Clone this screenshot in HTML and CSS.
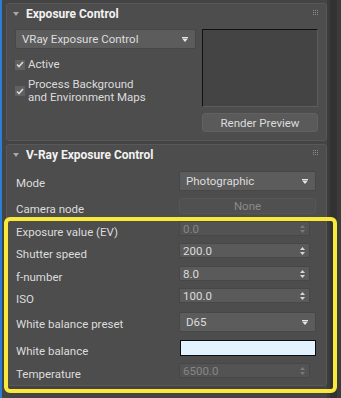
FILE: index.html
```html
<!DOCTYPE html>
<html lang="en">
<head>
  <meta charset="UTF-8">
  <title>Exposure Control</title>
  <link rel="stylesheet" href="styles.css">
</head>
<body>
  <div class="app">
    <div class="stripe"></div>

    <div class="rollouts">
      <!-- Exposure Control rollout -->
      <section class="rollout">
        <header class="rollout-head">
          <svg class="caret" width="6" height="4" viewBox="0 0 6 4"><path d="M0 0H6L3 4Z" fill="#a8a8a8"/></svg>
          <span class="title">Exposure Control</span>
          <svg class="grip" width="5" height="5" viewBox="0 0 5 5" fill="#8c8c8c"><rect x="0" y="0" width="1" height="1"/><rect x="2" y="0" width="1" height="1"/><rect x="4" y="0" width="1" height="1"/><rect x="0" y="2" width="1" height="1"/><rect x="2" y="2" width="1" height="1"/><rect x="4" y="2" width="1" height="1"/><rect x="0" y="4" width="1" height="1"/><rect x="2" y="4" width="1" height="1"/><rect x="4" y="4" width="1" height="1"/></svg>
        </header>
        <div class="rollout-body split">
          <div class="col-main">
            <div class="dropdown">
              <span>VRay Exposure Control</span>
              <svg class="arrow" width="6" height="5" viewBox="0 0 6 5"><path d="M0 0H6V1H0Z M0 1.5H6L3 5Z" fill="#e6e6e6"/></svg>
            </div>
            <div class="check first">
              <span class="box"><svg width="8" height="7" viewBox="0 0 8 7"><path d="M1 3.5L3 5.5L7 1" fill="none" stroke="#d8d8d8" stroke-width="1.6"/></svg></span>
              <span>Active</span>
            </div>
            <div class="check">
              <span class="box"><svg width="8" height="7" viewBox="0 0 8 7"><path d="M1 3.5L3 5.5L7 1" fill="none" stroke="#d8d8d8" stroke-width="1.6"/></svg></span>
              <span class="lines"><span>Process Background</span><span>and Environment Maps</span></span>
            </div>
          </div>
          <div class="col-side">
            <div class="preview"></div>
            <div class="button">Render Preview</div>
          </div>
        </div>
      </section>

      <!-- V-Ray Exposure Control rollout -->
      <section class="rollout">
        <header class="rollout-head head-two">
          <svg class="caret" width="6" height="4" viewBox="0 0 6 4"><path d="M0 0H6L3 4Z" fill="#a8a8a8"/></svg>
          <span class="title">V-Ray Exposure Control</span>
          <svg class="grip" width="5" height="5" viewBox="0 0 5 5" fill="#8c8c8c"><rect x="0" y="0" width="1" height="1"/><rect x="2" y="0" width="1" height="1"/><rect x="4" y="0" width="1" height="1"/><rect x="0" y="2" width="1" height="1"/><rect x="2" y="2" width="1" height="1"/><rect x="4" y="2" width="1" height="1"/><rect x="0" y="4" width="1" height="1"/><rect x="2" y="4" width="1" height="1"/><rect x="4" y="4" width="1" height="1"/></svg>
        </header>
        <div class="rollout-body params">
          <div class="row r-mode">
            <span class="label">Mode</span>
            <div class="dropdown">
              <span>Photographic</span>
              <svg class="arrow" width="6" height="5" viewBox="0 0 6 5"><path d="M0 0H6V1H0Z M0 1.5H6L3 5Z" fill="#e6e6e6"/></svg>
            </div>
          </div>
          <div class="row r-node">
            <span class="label">Camera node</span>
            <div class="button off">None</div>
          </div>
          <div class="row r-spin">
            <span class="label">Exposure value (EV)</span>
            <div class="spinner off"><span>0.0</span><svg class="ticks" width="5" height="8" viewBox="0 0 5 8"><path d="M2.5 0L5 3H0Z M0 5H5L2.5 8Z" fill="#7a7a7a"/></svg></div>
          </div>
          <div class="row r-spin">
            <span class="label">Shutter speed</span>
            <div class="spinner"><span>200.0</span><svg class="ticks" width="5" height="8" viewBox="0 0 5 8"><path d="M2.5 0L5 3H0Z M0 5H5L2.5 8Z" fill="#d6d6d6"/></svg></div>
          </div>
          <div class="row r-spin gap8">
            <span class="label">f-number</span>
            <div class="spinner"><span>8.0</span><svg class="ticks" width="5" height="8" viewBox="0 0 5 8"><path d="M2.5 0L5 3H0Z M0 5H5L2.5 8Z" fill="#d6d6d6"/></svg></div>
          </div>
          <div class="row r-spin">
            <span class="label">ISO</span>
            <div class="spinner"><span>100.0</span><svg class="ticks" width="5" height="8" viewBox="0 0 5 8"><path d="M2.5 0L5 3H0Z M0 5H5L2.5 8Z" fill="#d6d6d6"/></svg></div>
          </div>
          <div class="row r-mode gap9">
            <span class="label">White balance preset</span>
            <div class="dropdown">
              <span>D65</span>
              <svg class="arrow" width="6" height="5" viewBox="0 0 6 5"><path d="M0 0H6V1H0Z M0 1.5H6L3 5Z" fill="#e6e6e6"/></svg>
            </div>
          </div>
          <div class="row r-node gap8">
            <span class="label">White balance</span>
            <div class="swatch"></div>
          </div>
          <div class="row r-spin">
            <span class="label">Temperature</span>
            <div class="spinner off"><span>6500.0</span><svg class="ticks" width="5" height="8" viewBox="0 0 5 8"><path d="M2.5 0L5 3H0Z M0 5H5L2.5 8Z" fill="#7a7a7a"/></svg></div>
          </div>
        </div>
      </section>
    </div>

    <div class="scrollbar"><div class="track"></div></div>

    <!-- highlight frame drawn over the parameter rows -->
    <div class="highlight"></div>
  </div>
</body>
</html>
```

FILE: styles.css
```css
/* general styling */
* {
  box-sizing: border-box;
  margin: 0;
  padding: 0;
}

html, body {
  height: 100%;
}

body {
  background-color: #444444;
  color: #dcdcdc;
  font-family: Roboto, "Noto Sans", sans-serif;
  font-size: 11.5px;
  overflow: hidden;
}

.app {
  display: flex;
  height: 398px;
  position: relative;
  width: 341px;
}

.stripe {
  background-color: #2a7ed4;
  flex: 0 0 2px;
}

.rollouts {
  display: flex;
  flex-direction: column;
  gap: 3px;
  padding: 3px 0 0 4px;
  width: 325px;
}

.scrollbar {
  background-color: #3b3b3b;
  display: flex;
  flex: 1;
  padding-left: 3px;
}

.scrollbar .track {
  background-color: #323232;
  width: 7px;
}

/* rollout panels */
.rollout {
  background-color: #4d4d4d;
  border: 1px solid #585858;
  border-radius: 3px;
  width: 321px;
}

.rollout-head {
  align-items: center;
  display: flex;
  height: 20px;
  padding: 0 8px 0 6px;
}

.head-two {
  height: 19px;
}

.caret {
  margin-right: 7px;
}

.title {
  color: #f2f2f2;
  flex: 1;
  font-size: 12px;
  font-weight: bold;
}

.grip {
  margin-top: -4px;
}

.rollout-body {
  padding: 5px 8px 8px 8px;
}

/* first rollout */
.split {
  display: flex;
  gap: 6px;
}

.col-main {
  display: flex;
  flex-direction: column;
  width: 181px;
}

.col-side {
  display: flex;
  flex: 1;
  flex-direction: column;
  gap: 6px;
}

.preview {
  background-color: #444444;
  border-bottom: 1px solid #5c5c5c;
  border-left: 1px solid #111111;
  border-right: 1px solid #5c5c5c;
  border-top: 1px solid #111111;
  height: 78px;
}

.check {
  align-items: center;
  display: flex;
  gap: 3px;
  line-height: 13px;
  margin-top: 7px;
}

.check.first {
  margin-top: 9px;
}

.lines {
  display: flex;
  flex-direction: column;
}

.box {
  align-items: center;
  background-color: #606060;
  display: flex;
  flex: 0 0 10px;
  height: 10px;
  justify-content: center;
}

/* controls */
.dropdown {
  align-items: center;
  background-color: #5c5c5c;
  border: 1px solid #474747;
  border-radius: 2px;
  display: flex;
  height: 20px;
  justify-content: space-between;
  padding: 0 7px 0 6px;
}

.button {
  align-items: center;
  background-color: #5a5a5a;
  border: 1px solid #616161;
  border-radius: 3px;
  display: flex;
  height: 19px;
  justify-content: center;
}

.button.off {
  background-color: #505050;
  border-color: #565656;
  color: #8a8a8a;
  height: 16px;
  width: 137px;
}

.spinner {
  align-items: center;
  background-color: #5a5a5a;
  border: 1px solid #474747;
  display: flex;
  height: 15px;
  justify-content: space-between;
  padding: 0 4px 0 3px;
  width: 131px;
}

.spinner.off {
  background-color: #535353;
  color: #868686;
}

.swatch {
  background-color: #e2f3ff;
  border: 1px solid #0c0c0c;
  height: 16px;
  margin-left: 1px;
  width: 136px;
}

/* second rollout rows */
.params {
  display: flex;
  flex-direction: column;
  gap: 7px;
  padding: 7px 10px 7px 9px;
}

.row {
  align-items: center;
  display: grid;
  grid-template-columns: 163px 1fr;
}

.label {
  align-self: start;
  white-space: nowrap;
}

.r-mode { grid-template-rows: 20px; height: 20px; }
.r-node { grid-template-rows: 16px; height: 16px; }
.r-spin { grid-template-rows: 15px; height: 15px; }

.r-mode .label { line-height: 20px; padding-top: 2px; }
.r-node .label { line-height: 16px; padding-top: 3px; }
.r-spin .label { line-height: 15px; padding-top: 4px; }

.gap8 { margin-top: 1px; }
.gap9 { margin-top: 2px; }

/* highlight frame */
.highlight {
  border: 4px solid #f9e93b;
  border-radius: 6px;
  height: 176px;
  left: 4px;
  pointer-events: none;
  position: absolute;
  top: 217px;
  width: 333px;
}
```
